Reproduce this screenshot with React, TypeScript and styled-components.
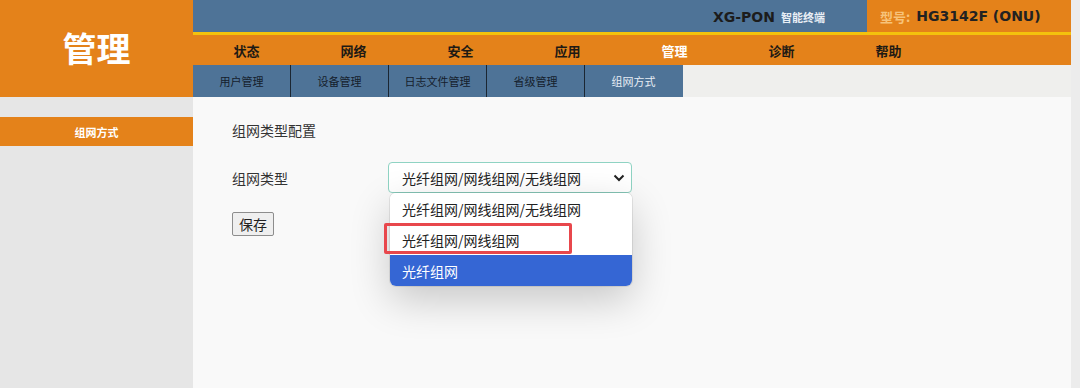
import styled, { createGlobalStyle } from 'styled-components';

const GlobalStyle = createGlobalStyle`
    html, body {
        margin: 0;
        padding: 0;
        background: #ececec;
        font-family: "Noto Sans CJK SC", "Noto Sans", sans-serif;
    }
`;

const Page = styled.div`
    width: 1071px;
    height: 388px;
    display: flex;
    flex-direction: column;
`;

const Header = styled.header`
    display: flex;
    height: 97px;
`;

const Logo = styled.div`
    width: 193px;
    background: #e4821a;
    color: #fff;
    font-size: 34px;
    font-weight: 700;
    display: flex;
    align-items: center;
    justify-content: center;
    padding-bottom: 2px;
    box-sizing: border-box;
`;

const HeaderMain = styled.div`
    flex: 1;
    display: flex;
    flex-direction: column;
`;

const TopBar = styled.div`
    height: 32px;
    background: #4e7397;
    display: flex;
    justify-content: flex-end;
    align-items: stretch;
    border-bottom: 3px solid #f4c20d;
`;

const Product = styled.div`
    display: flex;
    align-items: center;
    gap: 6px;
    padding-right: 42px;
    padding-top: 1px;
`;

const ProductName = styled.span`
    font-family: "DejaVu Sans", sans-serif;
    font-weight: 700;
    font-size: 14px;
    color: #1c1c1c;
`;

const ProductTag = styled.span`
    font-size: 11px;
    color: #e8eef5;
    font-weight: 700;
`;

const ModelBox = styled.div`
    width: 204px;
    background: #e4821a;
    display: flex;
    align-items: center;
    padding-left: 13px;
    box-sizing: border-box;
    gap: 6px;
`;

const ModelLabel = styled.span`
    font-size: 13px;
    font-weight: 700;
    color: #f7c37a;
`;

const ModelValue = styled.span`
    font-family: "DejaVu Sans", sans-serif;
    font-weight: 700;
    font-size: 14px;
    color: #222;
`;

const Nav = styled.nav`
    height: 30px;
    background: #e4821a;
    display: flex;
`;

const NavItem = styled.div<{ $active?: boolean }>`
    width: 107px;
    display: flex;
    align-items: center;
    justify-content: center;
    font-size: 13px;
    font-weight: 700;
    color: ${p => (p.$active ? '#fff' : '#1e1a14')};
`;

const SubTabs = styled.div`
    flex: 1;
    display: flex;
    background: #efefed;
`;

const SubTab = styled.div<{ $last?: boolean }>`
    width: 97px;
    background: #4e7397;
    display: flex;
    align-items: center;
    justify-content: center;
    font-size: 11px;
    color: ${p => (p.$last ? '#e6edf4' : '#15202c')};
    border-right: ${p => (p.$last ? 'none' : '1px solid #1b2632')};
    padding-right: ${p => (p.$last ? '1px' : '0')};
`;

const Body = styled.div`
    flex: 1;
    display: flex;
`;

const Sidebar = styled.aside`
    width: 193px;
    background: #e6e6e6;
    padding-top: 20px;
    box-sizing: border-box;
`;

const SideItem = styled.div`
    height: 29px;
    background: #e4821a;
    color: #fff;
    font-size: 11px;
    font-weight: 700;
    display: flex;
    align-items: center;
    justify-content: center;
`;

const Content = styled.main`
    flex: 1;
    background: #f9f9f9;
    padding: 20px 0 0 39px;
    position: relative;
    font-size: 14px;
    color: #333;
`;

const SectionTitle = styled.div`
    height: 26px;
    line-height: 26px;
`;

const FieldRow = styled.div`
    display: flex;
    align-items: center;
    margin-top: 19px;
    height: 31px;
`;

const FieldLabel = styled.div`
    width: 156px;
`;

const Select = styled.div`
    width: 244px;
    height: 31px;
    box-sizing: border-box;
    border: 1px solid #8fd3c3;
    border-radius: 4px;
    background: #fff;
    display: flex;
    align-items: center;
    justify-content: space-between;
    padding: 0 6px 0 13px;
    font-size: 14px;
    color: #222;
    position: relative;
`;

const Dropdown = styled.ul`
    position: absolute;
    left: 1px;
    top: 30px;
    width: 242px;
    margin: 0;
    padding: 0;
    list-style: none;
    background: #fff;
    border-radius: 6px;
    box-shadow: 0 14px 40px rgba(0, 0, 0, 0.2), 0 0 0 1px rgba(0, 0, 0, 0.08);
    overflow: hidden;
    z-index: 2;
`;

const Option = styled.li<{ $selected?: boolean }>`
    height: 31px;
    display: flex;
    align-items: center;
    padding-left: 12px;
    font-size: 14px;
    color: ${p => (p.$selected ? '#fff' : '#222')};
    background: ${p => (p.$selected ? '#3566d4' : '#fff')};
`;

const Marker = styled.div`
    position: absolute;
    left: -5px;
    top: 60px;
    width: 188px;
    height: 31px;
    box-sizing: border-box;
    border: 3px solid #e8474c;
    border-radius: 2px;
    z-index: 3;
`;

const SaveButton = styled.button`
    margin-top: 19px;
    height: 24px;
    width: 42px;
    padding: 0;
    font-family: inherit;
    font-size: 14px;
    color: #222;
    background: #efefef;
    border: 1px solid #8d8d8d;
    border-radius: 2px;
`;

const navItems = ['状态', '网络', '安全', '应用', '管理', '诊断', '帮助'];
const subTabs = ['用户管理', '设备管理', '日志文件管理', '省级管理', '组网方式'];
const options = ['光纤组网/网线组网/无线组网', '光纤组网/网线组网', '光纤组网'];

export default function App() {
    return (
        <>
            <GlobalStyle />
            <Page>
                <Header>
                    <Logo>管理</Logo>
                    <HeaderMain>
                        <TopBar>
                            <Product>
                                <ProductName>XG-PON</ProductName>
                                <ProductTag>智能终端</ProductTag>
                            </Product>
                            <ModelBox>
                                <ModelLabel>型号:</ModelLabel>
                                <ModelValue>HG3142F (ONU)</ModelValue>
                            </ModelBox>
                        </TopBar>
                        <Nav>
                            {navItems.map(item => (
                                <NavItem key={item} $active={item === '管理'}>{item}</NavItem>
                            ))}
                        </Nav>
                        <SubTabs>
                            {subTabs.map((tab, i) => (
                                <SubTab key={tab} $last={i === subTabs.length - 1}>{tab}</SubTab>
                            ))}
                        </SubTabs>
                    </HeaderMain>
                </Header>
                <Body>
                    <Sidebar>
                        <SideItem>组网方式</SideItem>
                    </Sidebar>
                    <Content>
                        <SectionTitle>组网类型配置</SectionTitle>
                        <FieldRow>
                            <FieldLabel>组网类型</FieldLabel>
                            <Select>
                                <span>{options[0]}</span>
                                <svg width="12" height="8" viewBox="0 0 12 8">
                                    <path d="M1.5 1.5 L6 6 L10.5 1.5" fill="none" stroke="#222" strokeWidth="2" />
                                </svg>
                                <Dropdown>
                                    {options.map((o, i) => (
                                        <Option key={o} $selected={i === 2}>{o}</Option>
                                    ))}
                                </Dropdown>
                                <Marker />
                            </Select>
                        </FieldRow>
                        <SaveButton>保存</SaveButton>
                    </Content>
                </Body>
            </Page>
        </>
    );
}
